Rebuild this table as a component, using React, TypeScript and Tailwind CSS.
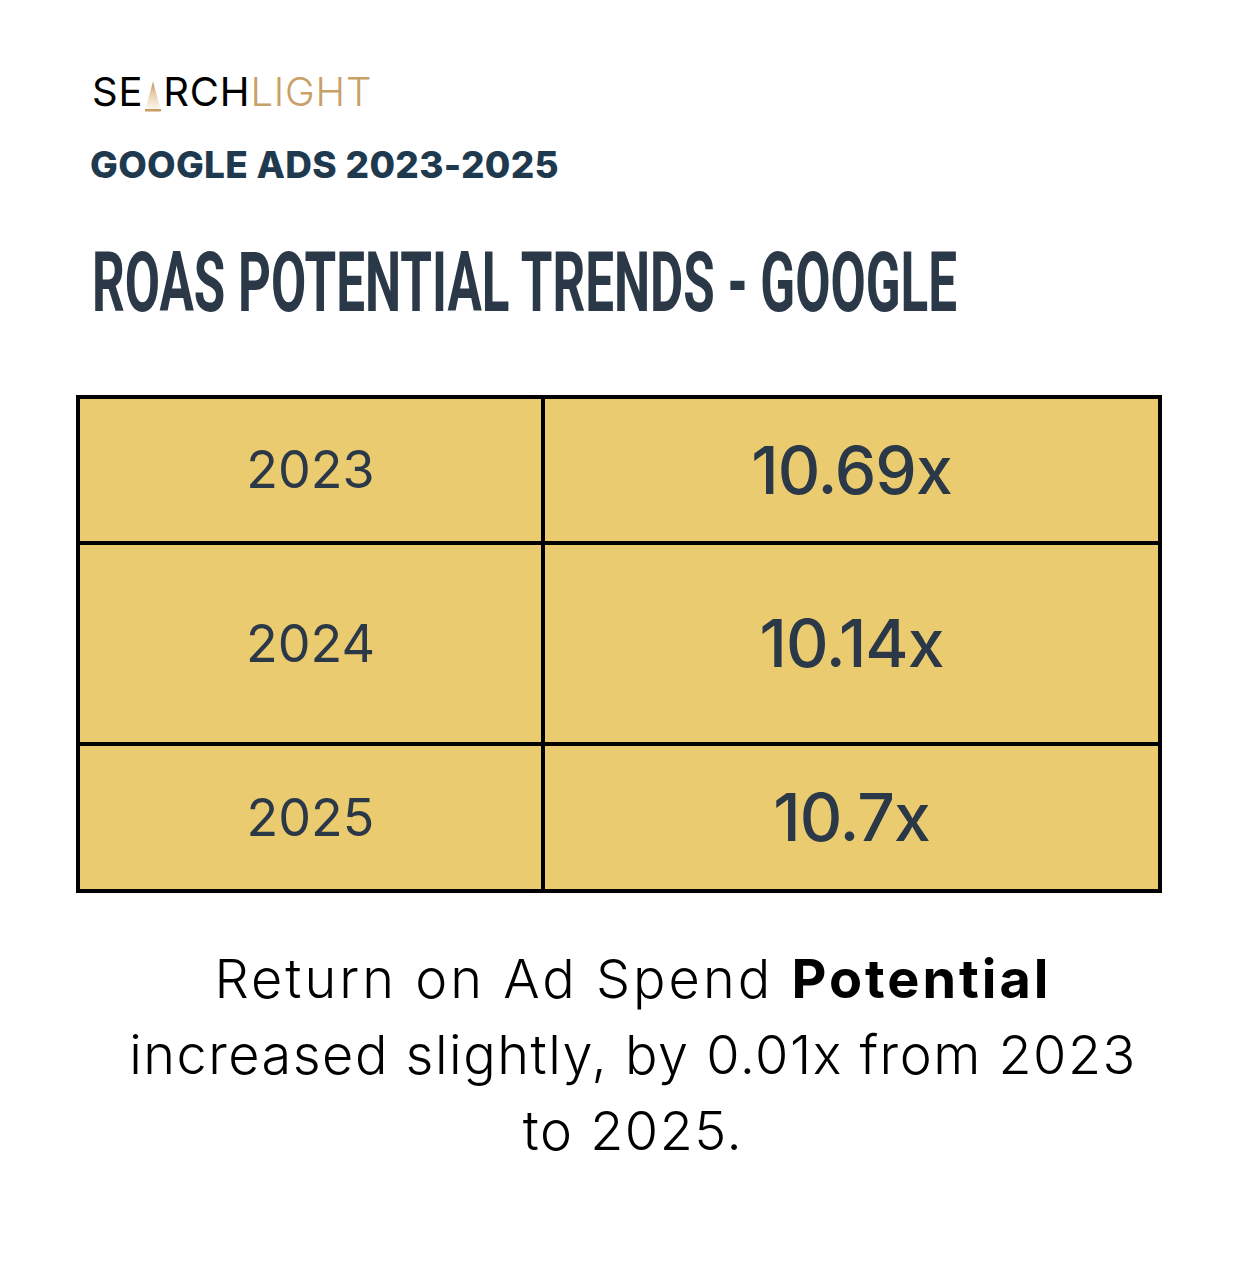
import React from "react";

const rows = [
  { year: "2023", value: "10.69x", h: "h-[142px]" },
  { year: "2024", value: "10.14x", h: "h-[201px]" },
  { year: "2025", value: "10.7x", h: "h-[147px]" },
];

function Logo() {
  return (
    <div className="flex items-end h-[40px] text-[40px] leading-none font-normal tracking-[0.8px]" style={{ fontFamily: '"Inter", "Liberation Sans", sans-serif' }}>
      <span className="text-black">SE</span>
      <svg width="18" height="31" viewBox="0 0 18 31" className="mx-[1px]">
        <defs>
          <linearGradient id="cone" x1="0" y1="0" x2="0" y2="1">
            <stop offset="0%" stopColor="#c0925a" />
            <stop offset="45%" stopColor="#e6cfac" />
            <stop offset="100%" stopColor="#fcf7ee" />
          </linearGradient>
        </defs>
        <polygon points="9,0.5 16.5,28 1.5,28" fill="url(#cone)" />
        <rect x="1" y="28" width="16" height="2.5" fill="#c79d63" />
      </svg>
      <span className="text-black">RCH</span>
      <span className="text-[#c8a068] font-light">LIGHT</span>
    </div>
  );
}

export default function App() {
  return (
    <div className="w-[1256px] h-[1278px] bg-white overflow-hidden relative" style={{ fontFamily: '"Inter", "Liberation Sans", sans-serif' }}>
      <div className="pt-[72px] pl-[92px]">
        <Logo />
        <div className="mt-[34px] -ml-[2px] text-[#1f3a4f] text-[37px] font-extrabold leading-none tracking-[0.3px]">
          GOOGLE ADS 2023-2025
        </div>
        <div className="mt-[58px] h-[82px] whitespace-nowrap">
          <div className="inline-block origin-left scale-x-[0.616] text-[#2b3847] text-[83px] font-bold leading-none" style={{ fontFamily: '"Roboto", "Liberation Sans", sans-serif' }}>
            ROAS POTENTIAL TRENDS - GOOGLE
          </div>
        </div>
      </div>

      <div className="ml-[76px] mt-[72px] w-[1086px] border-[4px] border-black bg-[#ebcb6f]">
        {rows.map((r, i) => (
          <div key={r.year} className={`flex ${r.h} ${i > 0 ? "border-t-[4px] border-black" : ""}`}>
            <div className="w-[461px] flex items-center justify-center text-[52px] text-[#2b3847] font-normal">
              {r.year}
            </div>
            <div className="flex-1 border-l-[4px] border-black flex items-center justify-center text-[66px] text-[#2b3847] font-medium tracking-[-1px]">
              {r.value}
            </div>
          </div>
        ))}
      </div>

      <div className="mt-[48px] ml-[110px] w-[1046px] text-center text-[54px] leading-[76px] tracking-[1.5px] text-black font-light">
        <span className="tracking-[3px]">
          Return on Ad Spend <span className="font-bold">Potential</span>
        </span>
        <br />
        increased slightly, by 0.01x from 2023
        <br />
        to 2025.
      </div>
    </div>
  );
}
